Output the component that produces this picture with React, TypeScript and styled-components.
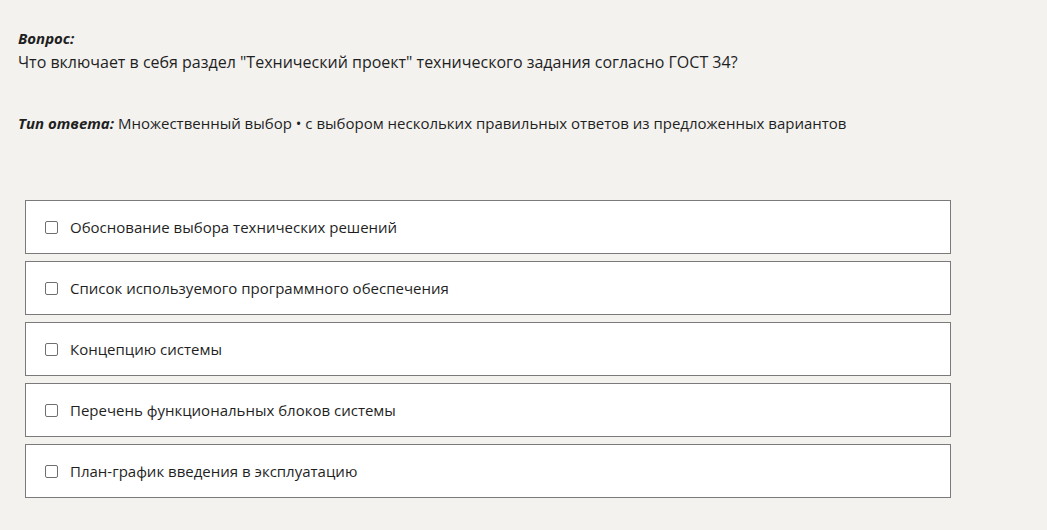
import React from 'react';
import styled, { createGlobalStyle } from 'styled-components';

const GlobalStyle = createGlobalStyle`
    html, body {
        margin: 0;
        padding: 0;
        background: #f3f2ef;
    }
    body {
        font-family: "Open Sans", "Noto Sans", sans-serif;
        color: #1f1f1f;
    }
`;

const Page = styled.div`
    padding: 28px 0 0 18px;
    width: 933px;
`;

const Label = styled.div`
    font-weight: 700;
    font-style: italic;
    font-size: 15px;
    line-height: 20px;
`;

const QuestionText = styled.div`
    margin-top: 2px;
    font-size: 16px;
    line-height: 24px;
`;

const AnswerType = styled.div`
    margin-top: 38px;
    font-size: 15px;
    line-height: 22px;

    b {
        font-style: italic;
    }
`;

const Options = styled.div`
    display: flex;
    flex-direction: column;
    gap: 7px;
    margin: 66px 0 0 7px;
`;

const Option = styled.label`
    display: flex;
    align-items: center;
    height: 54px;
    box-sizing: border-box;
    background: #ffffff;
    border: 1px solid #7a7a7a;
    padding-left: 19px;
    font-size: 15px;
    cursor: pointer;
`;

const Box = styled.input`
    appearance: none;
    width: 13px;
    height: 13px;
    margin: 0 12px 0 0;
    border: 1px solid #6f6f6f;
    border-radius: 2px;
    background: #fff;
    flex-shrink: 0;

    &:checked {
        background: #0067c0;
        border-color: #0067c0;
    }
`;

const options = [
    'Обоснование выбора технических решений',
    'Список используемого программного обеспечения',
    'Концепцию системы',
    'Перечень функциональных блоков системы',
    'План-график введения в эксплуатацию',
];

const App = () => {
    return (
        <>
            <GlobalStyle />
            <Page>
                <Label>Вопрос:</Label>
                <QuestionText>Что включает в себя раздел "Технический проект" технического задания согласно ГОСТ 34?</QuestionText>
                <AnswerType>
                    <b>Тип ответа:</b> Множественный выбор • с выбором нескольких правильных ответов из предложенных вариантов
                </AnswerType>
                <Options>
                    {options.map(text => (
                        <Option key={text}>
                            <Box type="checkbox" />
                            {text}
                        </Option>
                    ))}
                </Options>
            </Page>
        </>
    );
};

export default App;
